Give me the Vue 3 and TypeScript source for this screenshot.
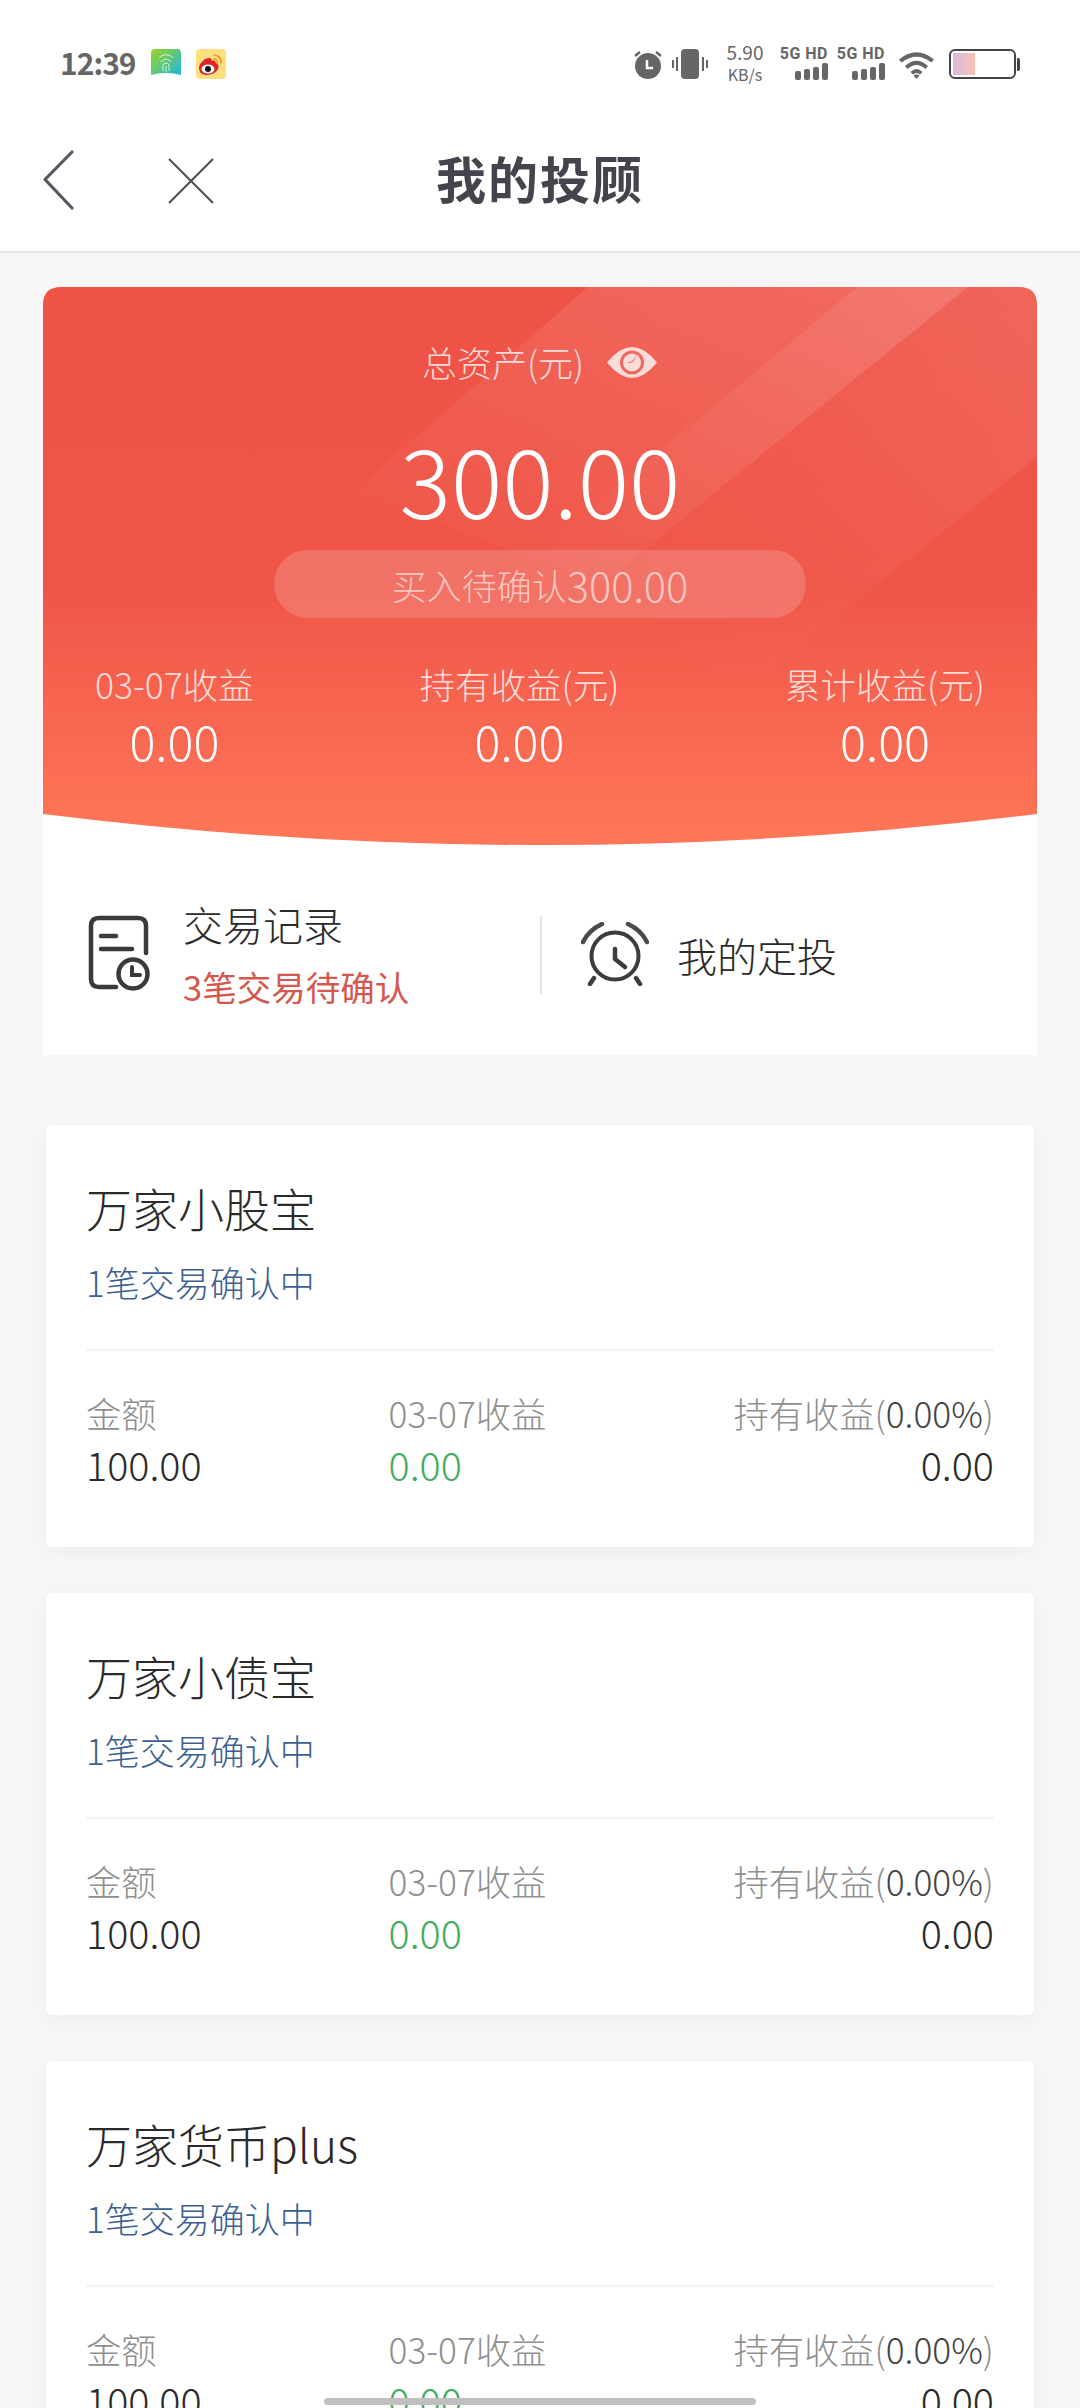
<script setup lang="ts">
type Fund = {
  name: string
  note: string
  amount: string
  daily: string
  held: string
}

const funds: Fund[] = [
  { name: '万家小股宝', note: '1笔交易确认中', amount: '100.00', daily: '0.00', held: '0.00' },
  { name: '万家小债宝', note: '1笔交易确认中', amount: '100.00', daily: '0.00', held: '0.00' },
  { name: '万家货币plus', note: '1笔交易确认中', amount: '100.00', daily: '0.00', held: '0.00' },
]

const stats = [
  { label: '03-07收益', value: '0.00' },
  { label: '持有收益(元)', value: '0.00' },
  { label: '累计收益(元)', value: '0.00' },
]
</script>

<template>
  <div class="page">
    <div class="status">
      <span class="time">12:39</span>
      <svg class="app-icon" viewBox="0 0 30 30">
        <defs>
          <linearGradient id="appGrad" x1="0" y1="0" x2="1" y2="1">
            <stop offset="0" stop-color="#9bd421" />
            <stop offset="1" stop-color="#17b6ea" />
          </linearGradient>
        </defs>
        <rect width="30" height="30" rx="4" fill="url(#appGrad)" />
        <path d="M8 9a9 9 0 0 1 14 0M10 13a6 6 0 0 1 10 0M12 22v-5a3 3 0 0 1 6 0v5M15 17v6" fill="none" stroke="#d8f5d0" stroke-width="1" />
        <path d="M0 26q15-4 30 0v4H0z" fill="#fff" />
      </svg>
      <svg class="app-icon weibo" viewBox="0 0 30 30">
        <rect width="30" height="30" rx="4" fill="#fedf80" />
        <path d="M3 19c0-5 6-10 10-10 2 0 3 1 2.500 3 3-1 5 0 4 2 2 .5 3 2 3 3.500C22.500 22 17 26 11 26c-4 0-8-2-8-7z" fill="#e0232a" />
        <ellipse cx="12" cy="20" rx="6.500" ry="4.500" fill="#fff" />
        <circle cx="12" cy="20" r="3" fill="#111" />
        <path d="M18 6a7 7 0 0 1 7 8M18 10a3.500 3.500 0 0 1 3.500 4" fill="none" stroke="#f09a1c" stroke-width="1.600" stroke-linecap="round" />
      </svg>

      <div class="status-right">
        <svg class="st-alarm" viewBox="0 0 28 29">
          <circle cx="14" cy="16" r="13" fill="#666" />
          <path d="M1 6l5-4M27 6l-5-4" stroke="#666" stroke-width="2.500" />
          <path d="M13 10v8h6" fill="none" stroke="#fff" stroke-width="2.500" />
        </svg>
        <svg class="st-vibrate" viewBox="0 0 36 30">
          <rect x="9" y="0" width="18" height="30" rx="4" fill="#666" />
          <path d="M1 11v8M5 8v14M31 8v14M35 11v8" stroke="#666" stroke-width="2" />
        </svg>
        <div class="st-speed">
          <span>5.90</span>
          <span class="unit">KB/s</span>
        </div>
        <div class="st-signal first">
          <span class="net">5G HD</span>
          <span class="bars"><i class="b1"></i><i class="b2"></i><i class="b3"></i><i class="b4"></i></span>
        </div>
        <div class="st-signal second">
          <span class="net">5G HD</span>
          <span class="bars"><i class="b1"></i><i class="b2"></i><i class="b3"></i><i class="b4"></i></span>
        </div>
        <svg class="st-wifi" viewBox="0 0 37 29">
          <path d="M1 9.500Q18.500-5 36 9.500L33.500 12.500Q18.500 1 3.500 12.500z" fill="#666" />
          <path d="M7 16Q18.500 5.500 30 16l-2.500 3Q18.500 11 9.500 19z" fill="#666" />
          <path d="M12.500 22Q18.500 16 24.500 22l-2.500 2.500Q18.500 21.500 15 24.500z" fill="#666" />
          <path d="M15.500 25.500Q18.500 23.500 21.500 25.500L18.500 29z" fill="#666" />
        </svg>
        <div class="st-battery">
          <div class="cell"><div class="level"></div></div>
          <div class="nub"></div>
        </div>
      </div>
    </div>

    <div class="nav">
      <svg class="nav-icons" viewBox="0 0 190 64">
        <path d="M30 3L3 30.500L30 59" fill="none" stroke="#55565f" stroke-width="3.200" stroke-linecap="round" stroke-linejoin="round" />
        <path d="M127 10L171 54M171 10L127 54" fill="none" stroke="#4a4b56" stroke-width="2" />
      </svg>
      <span class="nav-title">我的投顾</span>
    </div>

    <div class="hero">
      <div class="hero-top">
        <svg class="hero-bg" viewBox="0 0 994 558">
          <defs>
            <linearGradient id="heroGrad" x1="0" y1="0" x2="0" y2="1">
              <stop offset="0" stop-color="#ef5246" />
              <stop offset="0.55" stop-color="#f05648" />
              <stop offset="1" stop-color="#ff7759" />
            </linearGradient>
            <linearGradient id="wash" x1="0.85" y1="0" x2="0.15" y2="1">
              <stop offset="0" stop-color="#fff" stop-opacity="0.13" />
              <stop offset="1" stop-color="#fff" stop-opacity="0" />
            </linearGradient>
            <linearGradient id="strip" x1="1" y1="0" x2="0" y2="1">
              <stop offset="0" stop-color="#fff" stop-opacity="0.1" />
              <stop offset="1" stop-color="#fff" stop-opacity="0" />
            </linearGradient>
            <linearGradient id="corner" x1="1" y1="0" x2="0.3" y2="1">
              <stop offset="0" stop-color="#fff" stop-opacity="0.11" />
              <stop offset="0.6" stop-color="#fff" stop-opacity="0.03" />
              <stop offset="1" stop-color="#fff" stop-opacity="0" />
            </linearGradient>
          </defs>
          <path d="M0 18Q0 0 18 0H976Q994 0 994 18V527Q497 589 0 527z" fill="url(#heroGrad)" />
          <path d="M545 0H925L560 296 310 205z" fill="url(#wash)" />
          <path d="M814 0H925L560 296 500 262z" fill="url(#strip)" />
          <path d="M925 0H976Q994 0 994 18V170L640 452 600 262z" fill="url(#corner)" />
        </svg>

        <div class="total">
          <span>总资产(元)</span>
          <svg class="eye" viewBox="0 0 52 31">
            <path d="M1 15.500Q26-15.500 51 15.500Q26 46.500 1 15.500z" fill="#fbdcd8" />
            <circle cx="26" cy="15.500" r="12" fill="#ee6a5e" />
            <circle cx="26" cy="15.500" r="9" fill="#fbdcd8" />
            <path d="M29 8a6 6 0 0 1-9 7 7 7 0 0 0 9-7z" fill="#ee7d72" />
          </svg>
        </div>
        <div class="amount">300.00</div>
        <div class="pending">买入待确认<span class="pending-num">300.00</span></div>
        <div class="stats">
          <div v-for="stat in stats" :key="stat.label" class="stat">
            <div class="stat-label">{{ stat.label }}</div>
            <div class="stat-value">{{ stat.value }}</div>
          </div>
        </div>
      </div>

      <div class="actions">
        <div class="action action-left">
          <svg class="doc-icon" viewBox="0 0 62 76">
            <path d="M58 38V11Q58 3 50 3H11Q3 3 3 11V64Q3 72 11 72H28" fill="none" stroke="#3a3a3a" stroke-width="4.500" stroke-linecap="round" />
            <path d="M13 21H28M13 34H44" fill="none" stroke="#3a3a3a" stroke-width="4.500" stroke-linecap="round" />
            <circle cx="45" cy="59" r="14.500" fill="none" stroke="#3a3a3a" stroke-width="4.500" />
            <path d="M44 52V60H52" fill="none" stroke="#3a3a3a" stroke-width="4" stroke-linecap="round" />
          </svg>
          <div>
            <div class="action-title">交易记录</div>
            <div class="action-note">3笔交易待确认</div>
          </div>
        </div>
        <div class="action-line"></div>
        <div class="action action-right">
          <svg class="clock-icon" viewBox="0 0 68 64">
            <circle cx="34" cy="34" r="23.500" fill="none" stroke="#3c3c3c" stroke-width="4" />
            <path d="M2 20Q8 8 21 2M66 20Q60 8 47 2" fill="none" stroke="#4a4a4a" stroke-width="4.500" stroke-linecap="round" />
            <path d="M34 27V37L44 45" fill="none" stroke="#3c3c3c" stroke-width="4.500" stroke-linecap="round" />
            <path d="M13 56L9 62M55 56L59 62" fill="none" stroke="#3c3c3c" stroke-width="4.500" stroke-linecap="round" />
          </svg>
          <div class="action-title">我的定投</div>
        </div>
      </div>
    </div>

    <div class="funds">
      <div v-for="fund in funds" :key="fund.name" class="fund">
        <div class="fund-name">{{ fund.name }}</div>
        <div class="fund-note">{{ fund.note }}</div>
        <div class="fund-line"></div>
        <div class="fund-row">
          <div>
            <div class="cell-label">金额</div>
            <div class="cell-value">{{ fund.amount }}</div>
          </div>
          <div>
            <div class="cell-label">03-07收益</div>
            <div class="cell-value green">{{ fund.daily }}</div>
          </div>
          <div class="align-right">
            <div class="cell-label">持有收益(<span class="rate">0.00%</span>)</div>
            <div class="cell-value">{{ fund.held }}</div>
          </div>
        </div>
      </div>
    </div>

    <div class="home-bar"></div>
  </div>
</template>

<style>
html,
body {
  margin: 0;
  background: #f7f7f7;
}
</style>

<style scoped>
.page {
  position: relative;
  width: 1080px;
  height: 2408px;
  overflow: hidden;
  background: #f7f7f7;
  font-family: "Noto Sans CJK SC", "Noto Sans", sans-serif;
  font-weight: 300;
  color: #2a2a2a;
}

.status {
  height: 100px;
  box-sizing: border-box;
  padding: 46px 60px 0 60px;
  display: flex;
  align-items: flex-start;
  background: #fff;
}

.time {
  width: 72px;
  font-size: 30px;
  line-height: 32px;
  font-weight: 700;
  color: #666;
  letter-spacing: -1px;
}

.app-icon {
  width: 30px;
  height: 30px;
  margin: 3px 0 0 19px;
}

.app-icon.weibo {
  margin-left: 15px;
}

.status-right {
  margin-left: auto;
  display: flex;
  align-items: flex-start;
}

.st-alarm {
  width: 28px;
  height: 29px;
  margin-top: 4px;
}

.st-vibrate {
  width: 36px;
  height: 30px;
  margin: 3px 0 0 10px;
}

.st-speed {
  width: 36px;
  margin: -3px 0 0 19px;
  display: flex;
  flex-direction: column;
  align-items: center;
  gap: 4px;
  font-size: 19px;
  line-height: 18px;
  font-weight: 400;
  color: #666;
}

.st-speed .unit {
  font-size: 16px;
}

.st-signal {
  width: 48px;
  display: flex;
  flex-direction: column;
  align-items: flex-end;
}

.st-signal.first {
  margin-left: 17px;
}

.st-signal.second {
  margin-left: 9px;
}

.net {
  font-family: "Roboto", sans-serif;
  font-size: 16px;
  line-height: 16px;
  font-weight: 700;
  letter-spacing: 0.5px;
  color: #666;
  white-space: nowrap;
}

.bars {
  margin-top: 1px;
  display: flex;
  align-items: flex-end;
  gap: 3px;
  height: 17px;
}

.bars i {
  width: 6px;
  border-radius: 2px;
  background: #666;
}

.bars .b1 {
  height: 9px;
}

.bars .b2 {
  height: 11px;
}

.bars .b3 {
  height: 13px;
}

.bars .b4 {
  height: 17px;
}

.st-wifi {
  width: 37px;
  height: 29px;
  margin: 4px 0 0 13px;
}

.st-battery {
  margin: 3px 0 0 14px;
  display: flex;
  align-items: center;
  width: 71px;
}

.cell {
  width: 67px;
  height: 30px;
  box-sizing: border-box;
  border: 2px solid #444;
  border-radius: 6px;
  padding: 2px;
}

.level {
  width: 22px;
  height: 100%;
  background: linear-gradient(90deg, #d9bbe0, #fcc0ae);
}

.nub {
  width: 3px;
  height: 13px;
  margin-left: 1px;
  background: #444;
  border-radius: 0 2px 2px 0;
}

.nav {
  position: relative;
  height: 153px;
  box-sizing: border-box;
  background: #fff;
  border-bottom: 2px solid #e6e6e6;
  display: flex;
  align-items: center;
  justify-content: center;
}

.nav-icons {
  position: absolute;
  left: 42px;
  top: 49px;
  width: 190px;
  height: 64px;
}

.nav-title {
  font-size: 50px;
  line-height: 60px;
  font-weight: 700;
  color: #44444f;
  letter-spacing: 2px;
  margin-top: 2px;
}

.hero {
  width: 994px;
  margin: 34px auto 0;
  background: #fff;
  border-radius: 18px 18px 0 0;
}

.hero-top {
  position: relative;
  height: 558px;
  box-sizing: border-box;
  padding-top: 51px;
  color: #fff;
}

.hero-bg {
  position: absolute;
  left: 0;
  top: 0;
  width: 994px;
  height: 558px;
}

.total,
.amount,
.pending,
.stats {
  position: relative;
}

.total {
  height: 48px;
  display: flex;
  align-items: center;
  justify-content: center;
  gap: 22px;
  font-size: 35px;
  line-height: 48px;
  color: rgba(255, 255, 255, 0.78);
}

.eye {
  width: 52px;
  height: 31px;
}

.amount {
  margin-top: 42px;
  font-size: 96px;
  line-height: 100px;
  text-align: center;
}

.pending {
  width: 532px;
  height: 68px;
  margin: 22px auto 0;
  border-radius: 34px;
  background: rgba(255, 255, 255, 0.17);
  display: flex;
  align-items: center;
  justify-content: center;
  font-size: 35px;
  color: rgba(255, 255, 255, 0.62);
}

.pending-num {
  font-size: 41.500px;
}

.stats {
  margin-top: 44px;
  padding: 0 52px;
  display: flex;
  justify-content: space-between;
}

.stat {
  text-align: center;
}

.stat-label {
  font-size: 35.500px;
  line-height: 44px;
  color: rgba(255, 255, 255, 0.78);
}

.stat-value {
  margin-top: 6px;
  font-size: 48.500px;
  line-height: 56px;
}

.actions {
  height: 210px;
  box-sizing: border-box;
  padding-top: 10px;
  display: flex;
  align-items: center;
}

.action {
  display: flex;
  align-items: center;
}

.action-left {
  width: 497px;
  box-sizing: border-box;
  padding-left: 45px;
  gap: 33px;
}

.action-right {
  padding-left: 39px;
  gap: 28px;
}

.doc-icon {
  width: 62px;
  height: 76px;
  margin-top: -4px;
}

.clock-icon {
  width: 68px;
  height: 64px;
  margin-top: -2px;
}

.action-line {
  width: 2px;
  height: 78px;
  background: #e3e3e3;
}

.action-title {
  font-size: 40px;
  line-height: 50px;
  color: #2a2a2a;
}

.action-note {
  margin-top: 12px;
  font-size: 34.500px;
  line-height: 50px;
  font-weight: 400;
  color: #d4584e;
}

.funds {
  width: 988px;
  margin: 70px auto 0;
  display: flex;
  flex-direction: column;
  gap: 46px;
}

.fund {
  height: 422px;
  flex-shrink: 0;
  box-sizing: border-box;
  padding: 52px 40px 0;
  background: #fff;
  border-radius: 6px;
  box-shadow: 0 4px 20px rgba(0, 0, 0, 0.05);
}

.fund-name {
  font-size: 46px;
  line-height: 60px;
  color: #2a2a2a;
}

.fund-note {
  margin-top: 22px;
  font-size: 35px;
  line-height: 46px;
  color: #3c5f92;
}

.fund-line {
  height: 2px;
  margin-top: 44px;
  background: #f3f3f3;
}

.fund-row {
  margin-top: 40px;
  display: flex;
  justify-content: space-between;
}

.align-right {
  text-align: right;
}

.cell-label {
  font-size: 35.300px;
  line-height: 44px;
  color: #8f8f8f;
  white-space: nowrap;
}

.rate {
  color: #444;
}

.cell-value {
  margin-top: 4px;
  font-size: 39.500px;
  line-height: 50px;
  color: #2a2a2a;
}

.green {
  color: #43ab5e;
}

.home-bar {
  position: absolute;
  left: 324px;
  top: 2398px;
  width: 432px;
  height: 7px;
  border-radius: 4px;
  background: #bfbfbf;
}
</style>
